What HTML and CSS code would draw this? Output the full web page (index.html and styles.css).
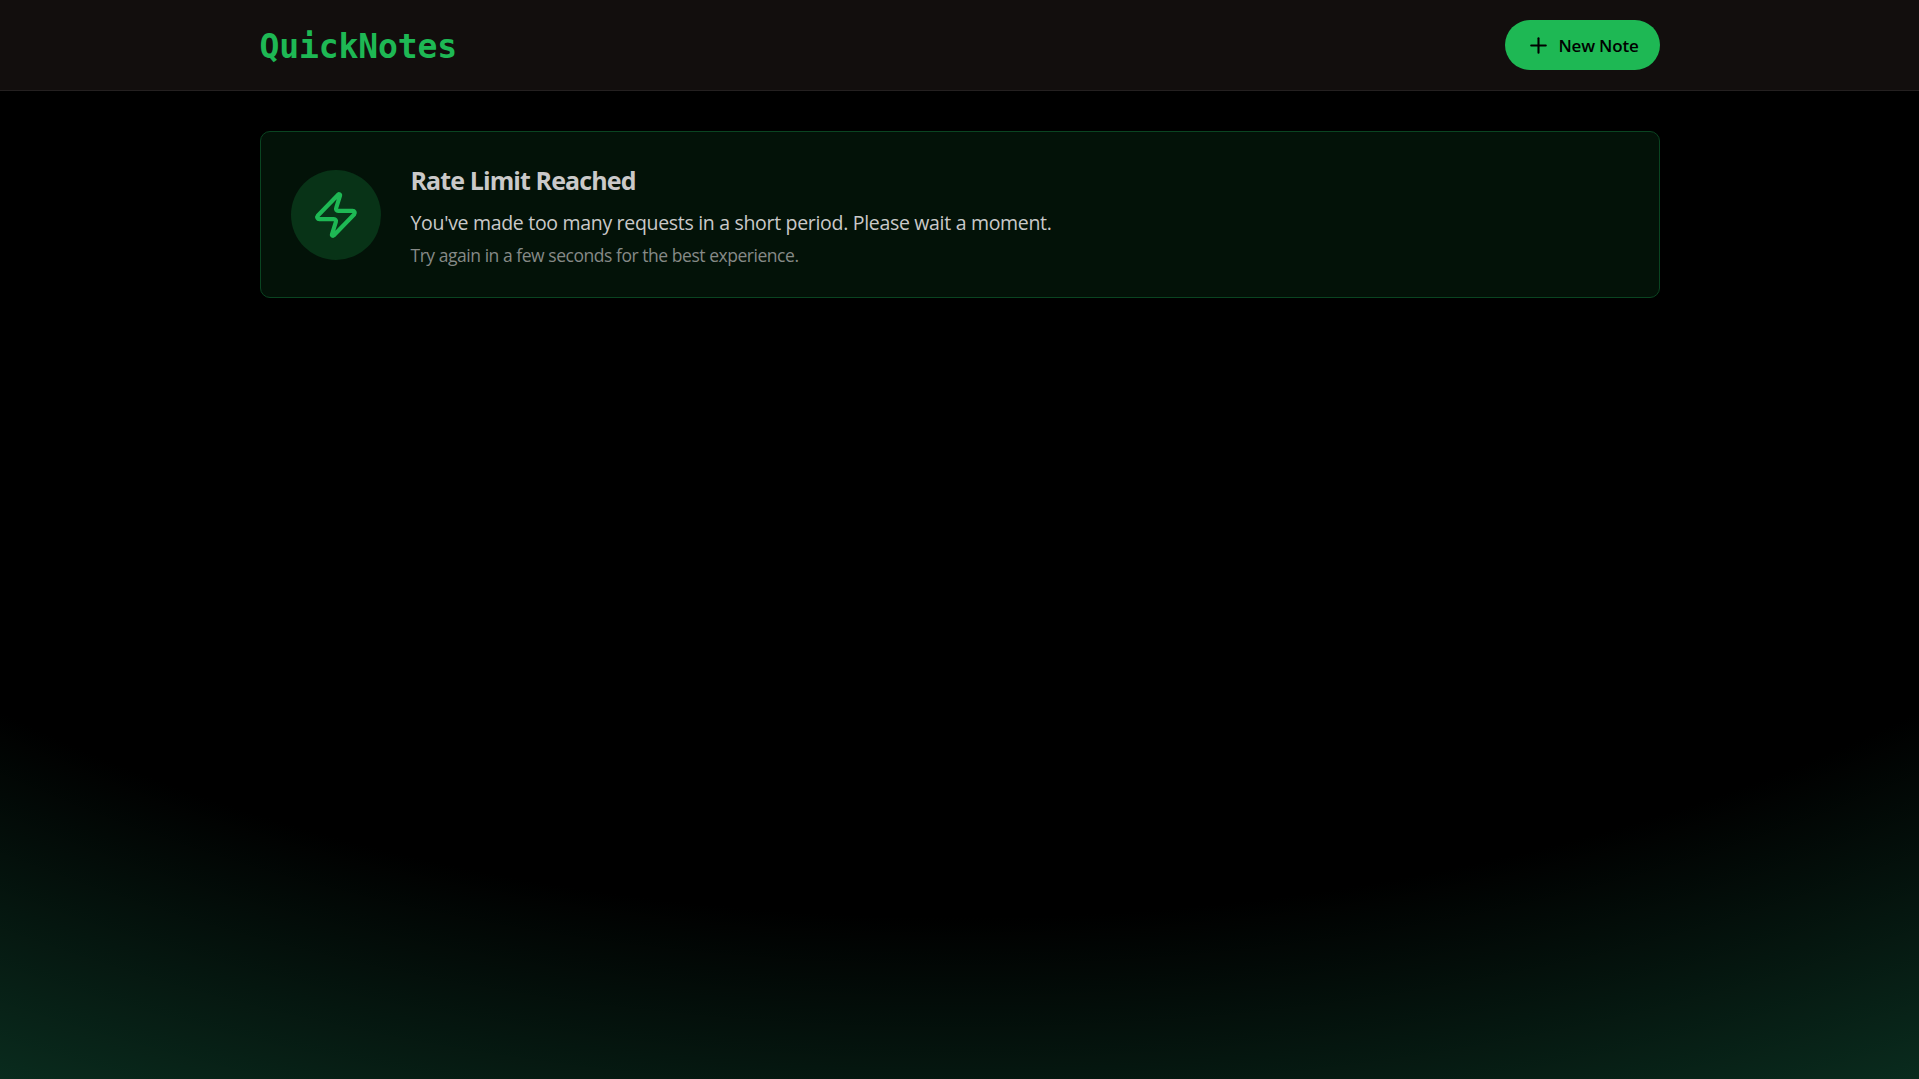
FILE: index.html
```html
<!DOCTYPE html>
<html lang="en">
<head>
<meta charset="utf-8">
<title>QuickNotes</title>
<link rel="stylesheet" href="styles.css">
</head>
<body>
<div class="page">
  <header class="navbar">
    <div class="container navbar-inner">
      <h1 class="logo">QuickNotes</h1>
      <a class="btn">
        <svg class="btn-icon" viewBox="0 0 24 24"><path d="M5 12h14"/><path d="M12 5v14"/></svg>
        <span>New Note</span>
      </a>
    </div>
  </header>
  <main class="container content">
    <section class="alert">
      <div class="alert-badge">
        <svg class="alert-icon" viewBox="0 0 24 24"><path d="M4 14a1 1 0 0 1-.78-1.63l9.9-10.2a.5.5 0 0 1 .86.46l-1.92 6.02A1 1 0 0 0 13 10h7a1 1 0 0 1 .78 1.63l-9.9 10.2a.5.5 0 0 1-.86-.46l1.92-6.02A1 1 0 0 0 11 14z"/></svg>
      </div>
      <div class="alert-body">
        <h3 class="alert-title">Rate Limit Reached</h3>
        <p class="alert-text">You've made too many requests in a short period. Please wait a moment.</p>
        <p class="alert-hint">Try again in a few seconds for the best experience.</p>
      </div>
    </section>
  </main>
</div>
</body>
</html>
```
FILE: styles.css
```css
* { box-sizing: border-box; margin: 0; padding: 0; }

body {
  background: #171212;
  color: #cac9c9;
  font-family: "Open Sans", "Noto Sans", sans-serif;
}

.page {
  min-height: 100vh;
  background: radial-gradient(125% 125% at 50% 10%, #000 60%, #00ff9d40 100%);
}

.container { width: 1400px; margin: 0 auto; }

.navbar {
  height: 91px;
  background: #120e0d;
  border-bottom: 1px solid #242020;
}

.navbar-inner {
  height: 90px;
  display: flex;
  align-items: center;
  justify-content: space-between;
}

.logo {
  padding-top: 2px;
  font: bold 33px/45px "DejaVu Sans Mono", monospace;
  letter-spacing: -0.12px;
  color: #1eb854;
}

.btn {
  width: 155px;
  height: 50px;
  padding: 0 18px 0 21px;
  display: flex;
  align-items: center;
  gap: 8px;
  border-radius: 25px;
  background: #1eb854;
  color: #000;
  font-size: 17px;
  font-weight: 600;
  letter-spacing: -0.2px;
  white-space: nowrap;
}

.btn-icon, .alert-icon {
  flex: none;
  fill: none;
  stroke: currentColor;
  stroke-width: 2;
  stroke-linecap: round;
  stroke-linejoin: round;
}

.btn-icon { width: 25px; height: 25px; }
.alert-icon { width: 50px; height: 50px; }

.content { padding-top: 40px; }

.alert {
  display: flex;
  align-items: center;
  gap: 30px;
  height: 167px;
  padding: 0 30px;
  border: 1px solid #0a4421;
  border-radius: 10px;
  background: #031208;
}

.alert-badge {
  flex: none;
  width: 90px;
  height: 90px;
  display: grid;
  place-items: center;
  border-radius: 50%;
  background: #083317;
  color: #1eb854;
}

.alert-body { padding-top: 2px; }

.alert-title {
  margin-bottom: 10px;
  font-size: 25px;
  font-weight: 700;
  line-height: 35px;
  letter-spacing: -0.9px;
}

.alert-text {
  font-size: 19.5px;
  line-height: 30px;
  letter-spacing: -0.31px;
}

.alert-hint {
  margin-top: 5px;
  font-size: 17.5px;
  line-height: 25px;
  letter-spacing: -0.46px;
  color: #868a87;
}
```
